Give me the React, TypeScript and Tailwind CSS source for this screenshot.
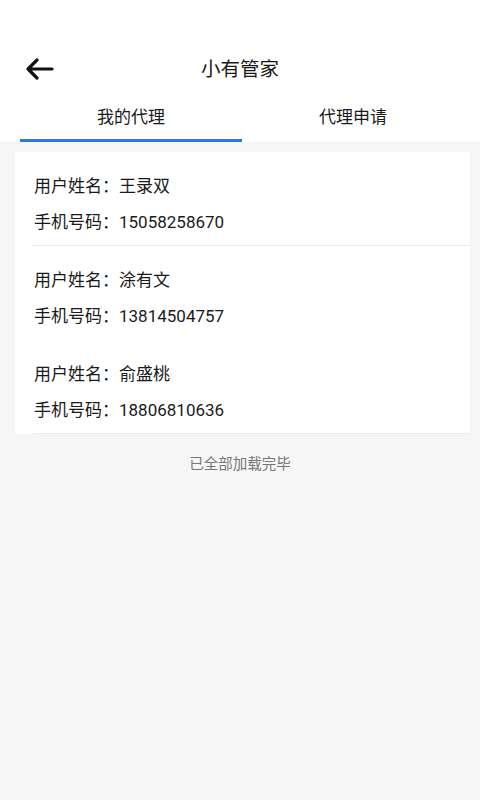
import React, { useState } from 'react';

interface Agent {
  id: number;
  name: string;
  phone: string;
  divider: boolean;
}

const agents: Agent[] = [
  { id: 1, name: '王录双', phone: '15058258670', divider: true },
  { id: 2, name: '涂有文', phone: '13814504757', divider: false },
  { id: 3, name: '俞盛桃', phone: '18806810636', divider: true },
];

export default function App() {
  const [tab, setTab] = useState(0);

  return (
    <div
      className="min-h-[800px] w-[480px] bg-[#f6f6f6] text-[#1a1a1a]"
      style={{ fontFamily: 'Roboto, "Noto Sans CJK SC", sans-serif' }}
    >
      {/* Header */}
      <div className="bg-white pt-[47px]">
        <div className="relative flex h-[46px] items-center justify-center">
          <button className="absolute left-[24px] top-[10px]">
            <svg width="30" height="24" viewBox="0 0 30 24" fill="none">
              <path d="M28 12H4M13 3l-9 9 9 9" stroke="#111" strokeWidth="3.2" strokeLinecap="round" strokeLinejoin="round" />
            </svg>
          </button>
          <span className="text-[19.5px] leading-none">小有管家</span>
        </div>

        {/* Tabs */}
        <div className="flex h-[49px] pl-[20px] pr-[16px]">
          {['我的代理', '代理申请'].map((t, i) => (
            <button
              key={t}
              onClick={() => setTab(i)}
              className="relative flex flex-1 items-center justify-center pt-[1px] text-[17px]"
            >
              {t}
              {tab === i && <span className="absolute bottom-0 left-0 right-0 h-[3px] bg-[#2f7ad9]" />}
            </button>
          ))}
        </div>
      </div>

      {/* List */}
      <div className="pt-[10px]">
        <div className="ml-[15px] mr-[10px] bg-white">
          {agents.map((a) => (
            <div key={a.id}>
              <div className="flex flex-col gap-[12px] pl-[19px] pt-[22px] pb-[11px] text-[17px] leading-[24px]">
                <div>用户姓名：{a.name}</div>
                <div>手机号码：{a.phone}</div>
              </div>
              <div className={`ml-[18px] h-px ${a.divider ? 'bg-[#ebebeb]' : 'bg-white'}`} />
            </div>
          ))}
        </div>
        <div className="pt-[20px] text-center text-[14.5px] text-[#777]">已全部加载完毕</div>
      </div>
    </div>
  );
}
